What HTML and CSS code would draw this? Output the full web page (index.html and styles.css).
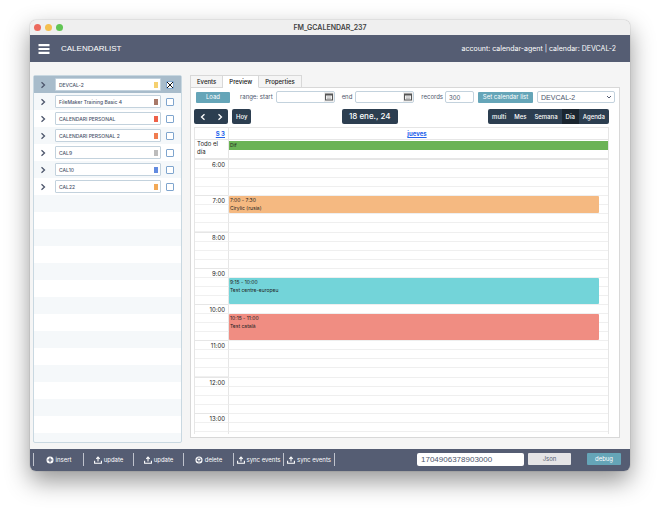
FILE: index.html
```html
<!DOCTYPE html>
<html lang="es">
<head>
<meta charset="utf-8">
<title>FM_GCALENDAR_237</title>
<link rel="stylesheet" href="styles.css">
</head>
<body>
<svg class="defs" aria-hidden="true">
  <symbol id="chevron" viewBox="0 0 8 8"><path d="M2.5 1.2 5.5 4l-3 2.8" fill="none" stroke="currentColor" stroke-width="1.3"/></symbol>
  <symbol id="share" viewBox="0 0 8 8"><path d="M.6 4.8v2.4h6.8V4.8M4 5.6V1.2M2.3 2.8 4 1.1l1.7 1.7" fill="none" stroke="currentColor" stroke-width="1.1"/></symbol>
  <symbol id="plus" viewBox="0 0 8 8"><circle cx="4" cy="4" r="3.5" fill="currentColor"/><path d="M4 1.7v4.6M1.7 4h4.6" stroke="#555d73" stroke-width="1.2"/></symbol>
  <symbol id="cross" viewBox="0 0 8 8"><circle cx="4" cy="4" r="3" fill="none" stroke="currentColor" stroke-width="1.1"/><path d="m2.5 2.5 3 3m0-3-3 3" stroke="currentColor" stroke-width="1.1"/></symbol>
  <symbol id="date" viewBox="0 0 8 7"><rect x=".5" y=".5" width="7" height="6" fill="#eee" stroke="#555"/><path d="M0 1.3h8" stroke="#555" stroke-width="1.6"/><path d="M2 3.5h4M2 5h4" stroke="#aaa" stroke-width=".7"/></symbol>
</svg>
<div class="window">
  <div class="titlebar">
    <span class="dot red"></span><span class="dot yellow"></span><span class="dot green"></span>
    <h1>FM_GCALENDAR_237</h1>
  </div>
  <header class="header">
    <button class="menu" aria-label="Menu"><svg viewBox="0 0 11 10"><path d="M0 1.2h11M0 5h11M0 8.8h11" stroke="#fff" stroke-width="2.2"/></svg></button>
    <h2>CALENDARLIST</h2>
    <p>account: calendar-agent | calendar: DEVCAL-2</p>
  </header>
  <div class="content">
    <ul class="list">
      <li class="selected"><button aria-label="Open"><svg><use href="#chevron"/></svg></button><label class="name" for="c1">DEVCAL-2<i class="swatch gold"></i></label><input id="c1" type="checkbox" checked></li>
      <li><button aria-label="Open"><svg><use href="#chevron"/></svg></button><label class="name" for="c2">FileMaker Training Basic 4<i class="swatch brown"></i></label><input id="c2" type="checkbox"></li>
      <li><button aria-label="Open"><svg><use href="#chevron"/></svg></button><label class="name" for="c3">CALENDARI PERSONAL<i class="swatch tomato"></i></label><input id="c3" type="checkbox"></li>
      <li><button aria-label="Open"><svg><use href="#chevron"/></svg></button><label class="name" for="c4">CALENDARI PERSONAL 2<i class="swatch coral"></i></label><input id="c4" type="checkbox"></li>
      <li><button aria-label="Open"><svg><use href="#chevron"/></svg></button><label class="name" for="c5">CAL9<i class="swatch gray"></i></label><input id="c5" type="checkbox"></li>
      <li><button aria-label="Open"><svg><use href="#chevron"/></svg></button><label class="name" for="c6">CAL10<i class="swatch blue"></i></label><input id="c6" type="checkbox"></li>
      <li><button aria-label="Open"><svg><use href="#chevron"/></svg></button><label class="name" for="c7">CAL22<i class="swatch orange"></i></label><input id="c7" type="checkbox"></li>
    </ul>
    <main class="main">
      <nav class="tabs"><button>Events</button><button class="active">Preview</button><button>Properties</button></nav>
      <section class="panel">
        <div class="filters">
          <button class="teal load">Load</button>
          <label for="start">range: start</label>
          <span class="datebox"><input id="start" type="text"><button aria-label="Pick start"><svg><use href="#date"/></svg></button></span>
          <label for="end">end</label>
          <span class="datebox"><input id="end" type="text"><button aria-label="Pick end"><svg><use href="#date"/></svg></button></span>
          <label for="records">records</label>
          <input id="records" class="records" type="text" value="300">
          <button class="teal set">Set calendar list</button>
          <span class="picker"><select aria-label="Calendar"><option>DEVCAL-2</option></select><svg viewBox="0 0 8 8"><path d="m2 3 2 2 2-2" fill="none" stroke="#555d73"/></svg></span>
        </div>
        <div class="calbar">
          <div class="side">
            <div class="group arrows"><button aria-label="Previous"><svg class="flip"><use href="#chevron"/></svg></button><button aria-label="Next"><svg><use href="#chevron"/></svg></button></div>
            <div class="group"><button>Hoy</button></div>
          </div>
          <h3>18 ene., 24</h3>
          <div class="group views"><button>multi</button><button>Mes</button><button>Semana</button><button class="on">Día</button><button>Agenda</button></div>
        </div>
        <div class="calendar">
          <div class="row days"><a href="#week">S 3</a><a href="#day">jueves</a></div>
          <div class="row allday"><span>Todo el día</span><div><b>Dif</b></div></div>
          <div class="scroller">
            <div class="timegrid">
              <span class="time">6:00</span><i></i><i></i><i></i><i></i>
              <span class="time">7:00</span><i></i><i></i><i></i><i></i>
              <span class="time">8:00</span><i></i><i></i><i></i><i></i>
              <span class="time">9:00</span><i></i><i></i><i></i><i></i>
              <span class="time">10:00</span><i></i><i></i><i></i><i></i>
              <span class="time">11:00</span><i></i><i></i><i></i><i></i>
              <span class="time">12:00</span><i></i><i></i><i></i><i></i>
              <span class="time">13:00</span><i></i><i></i><i></i><i></i>
              <div class="events">
                <article class="cyrillic"><small>7:00 - 7:30</small>Cirylic (rusia)</article>
                <article class="centre"><small>9:15 - 10:00</small>Test centre-europeu</article>
                <article class="catala"><small>10:15 - 11:00</small>Test català</article>
              </div>
            </div>
          </div>
        </div>
      </section>
    </main>
  </div>
  <footer class="footer">
    <div class="actions">
      <button><svg><use href="#plus"/></svg>insert</button>
      <button><svg><use href="#share"/></svg>update</button>
      <button><svg><use href="#share"/></svg>update</button>
      <button><svg><use href="#cross"/></svg>delete</button>
      <button><svg><use href="#share"/></svg>sync events</button>
      <button><svg><use href="#share"/></svg>sync events</button>
    </div>
    <input class="token" type="text" value="1704906378903000" aria-label="Token">
    <button class="json">Json</button>
    <button class="teal debug">debug</button>
  </footer>
</div>
</body>
</html>
```
FILE: styles.css
```css
* { box-sizing: border-box; }
body {
  margin: 0;
  height: 100vh;
  padding: 20px 30px 39px;
  background: #fff;
  color: #4d566c;
  font: 6px/8px Inter, "Liberation Sans", sans-serif;
  overflow: hidden;
}
h1, h2, h3, p, ul { margin: 0; padding: 0; font: inherit; }
button, input, select { margin: 0; padding: 0; border: 0; background: none; font: inherit; color: inherit; }
button { display: flex; align-items: center; justify-content: center; }
svg { flex: none; width: 8px; height: 8px; }
.defs { position: absolute; width: 0; height: 0; }

.window {
  display: flex;
  flex-direction: column;
  height: 100%;
  border-radius: 6px;
  background: #f5f5f5;
  overflow: hidden;
  box-shadow: 0 0 1px rgba(0, 0, 0, .5), 0 10px 24px rgba(0, 0, 0, .42);
}
.titlebar { position: relative; display: flex; flex: none; align-items: center; gap: 4px; height: 15px; padding-left: 4px; background: #efefef; }
.titlebar h1 { position: absolute; inset: 3px 0 auto; text-align: center; font-size: 7px; font-weight: 600; line-height: 9px; color: #444; }
.dot { width: 7px; height: 7px; border-radius: 50%; }
.red { background: #ec6a5e; }
.yellow { background: #f4bf4f; }
.green { background: #61c554; }

.header { display: flex; flex: none; align-items: center; height: 27px; padding: 0 14px 0 8px; background: #555d73; color: #fff; font-size: 7px; }
.menu svg { width: 12px; height: 10px; }
.header h2 { margin-left: 11px; font: 8px/10px "Liberation Sans", sans-serif; }
.header p { margin-left: auto; }

.content { display: flex; flex: 1; min-height: 0; gap: 8px; padding: 13px 10px 6px 3px; }
.list {
  flex: 0 0 149px;
  list-style: none;
  border: 1px solid #c9d8e1;
  border-radius: 2px;
  background: repeating-linear-gradient(#fff 0 17px, #f5f8fa 17px 34px);
}
.list li { display: flex; align-items: center; height: 17px; padding: 0 7px 0 5px; }
.list li.selected { background: #a8bccb; }
.list button { width: 8px; height: 8px; margin-right: 8px; }
.name {
  display: flex;
  flex: 1;
  align-items: center;
  justify-content: space-between;
  height: 13px;
  margin-right: 5px;
  padding: 0 2px 0 3px;
  border: 1px solid #c3d2dd;
  border-radius: 1px;
  background: #fff;
  font-size: 5px;
  font-weight: 500;
}
.swatch { width: 4px; height: 6px; }
.gold { background: #f5d06f; }
.brown { background: #a87868; }
.tomato { background: #ee6048; }
.coral { background: #f07d50; }
.gray { background: #bcbcbc; }
.blue { background: #628be0; }
.orange { background: #f3a956; }
.list input { appearance: none; width: 8px; height: 8px; border: 1px solid #7fa5ce; border-radius: 1px; background: #fff; }
.list input:checked {
  background:
    linear-gradient(45deg, transparent 44%, #111 44% 56%, transparent 56%) padding-box,
    linear-gradient(-45deg, #fff 44%, #111 44% 56%, #fff 56%) padding-box;
}

.main { display: flex; flex: 1; flex-direction: column; min-width: 0; padding-bottom: 5px; }
.tabs { display: flex; z-index: 1; margin-bottom: -1px; }
.tabs button { height: 13px; padding: 0 6px; border: 1px solid #d8d8d8; border-left-width: 0; font-weight: 500; color: #222; }
.tabs button:first-child { border-left-width: 1px; }
.tabs .active { border-bottom-color: #fff; background: #fff; color: #111; }
.panel { display: flex; flex: 1; flex-direction: column; min-height: 0; padding: 3px 10px 3px 3px; border: 1px solid #d8d8d8; background: #fff; }

.filters { display: flex; align-items: center; height: 12px; margin: 0 -6px 0 2px; }
.teal { height: 11px; border-radius: 1px; background: #65a5b8; color: #fff; }
.load { width: 34px; margin-right: 10px; }
.datebox { display: flex; width: 59px; height: 12px; margin: 0 7px 0 3px; border: 1px solid #c3d2dd; border-radius: 2px; background: #fff; }
.datebox input { flex: 1; min-width: 0; }
.datebox button { width: 10px; background: #eee; }
.records { width: 29px; height: 12px; margin: 0 4px 0 2px; padding: 0 3px; border: 1px solid #c3d2dd; border-radius: 2px; }
.set { width: 55px; margin-right: 4px; }
.picker { position: relative; flex: 1; height: 12px; border: 1px solid #c3d2dd; border-radius: 2px; }
.picker select { display: block; appearance: none; width: 100%; height: 10px; padding-left: 3px; font: 7px/9px "Liberation Sans", sans-serif; }
.picker svg { position: absolute; right: 1px; top: 1px; pointer-events: none; }

.calbar { display: flex; flex: none; align-items: center; justify-content: space-between; height: 15px; margin: 6px 0 3px; font-weight: 500; color: #fff; }
.side { display: flex; gap: 4px; }
.group { display: flex; height: 15px; border-radius: 2px; background: #2c3e50; overflow: hidden; }
.group button { padding: 0 4px; }
.arrows button { width: 17px; }
.flip { transform: scaleX(-1); }
.on { background: #1a252f; }
.calbar h3 { padding: 3px 7px; border-radius: 2px; background: #2c3e50; font-size: 8px; font-weight: 500; line-height: 9px; }

.calendar { display: flex; flex: 1; flex-direction: column; min-height: 0; border: 1px solid #e6e6e6; border-bottom: 0; color: #222; }
.row { display: grid; flex: none; grid-template-columns: 33px 1fr; border-bottom: 1px solid #e6e6e6; }
.row > :last-child { border-left: 1px solid #e6e6e6; }
.days { height: 12px; font-weight: 700; line-height: 11px; }
.days a { padding-right: 3px; text-align: right; color: #2563eb; }
.days a:last-child { text-align: center; }
.allday { height: 20px; border-bottom: 2px solid #e6e6e6; }
.allday span { width: 27px; margin-left: 2px; }
.allday b { height: 9px; margin-top: 1px; padding-left: 1px; display: block; background: #6bb356; font-size: 5px; font-weight: 400; line-height: 9px; }
.scroller { flex: 1; min-height: 0; overflow: hidden; }
.timegrid { position: relative; display: grid; grid-template-columns: 33px 1fr; grid-template-rows: repeat(32, 1fr); grid-auto-flow: row dense; height: 290px; }
.time {
  grid-column: 1;
  grid-row: span 4;
  padding: 1px 3px 0 0;
  border-bottom: 1px solid #e6e6e6;
  background: repeating-linear-gradient(transparent 0 8px, #f0f0f0 8px 9px);
  text-align: right;
}
.timegrid i { grid-column: 2; border-bottom: 1px solid #efefef; border-left: 1px solid #e6e6e6; }
.events { position: absolute; inset: 0 9px 0 34px; display: grid; grid-template-rows: repeat(32, 1fr); }
.events article { min-height: 0; margin-bottom: 1px; padding: 0 1px; border-radius: 1px; font-size: 5px; overflow: hidden; }
.events small { display: block; font-size: 5px; }
.cyrillic { grid-row: 5 / 7; background: #f5b981; }
.centre { grid-row: 14 / 17; background: #73d4d9; }
.catala { grid-row: 18 / 21; background: #f08d82; }

.footer { display: flex; flex: none; height: 22px; padding: 4px 9px 5px 3px; background: #555d73; color: #fff; }
.actions { display: flex; flex: 1; }
.actions button { width: 50px; gap: 2px; border-left: 1px solid #bfc3cd; white-space: nowrap; }
.actions button:last-child { width: 52px; border-right: 1px solid #bfc3cd; }
.token { width: 107px; height: 13px; padding: 0 4px; border-radius: 2px; background: #fff; color: #4d566c; font: 8px/10px "Liberation Sans", sans-serif; }
.json { width: 43px; height: 12px; margin: 0 16px 0 4px; border-radius: 1px; background: #e4e4e6; color: #555d73; }
.debug { width: 34px; height: 12px; }
```
